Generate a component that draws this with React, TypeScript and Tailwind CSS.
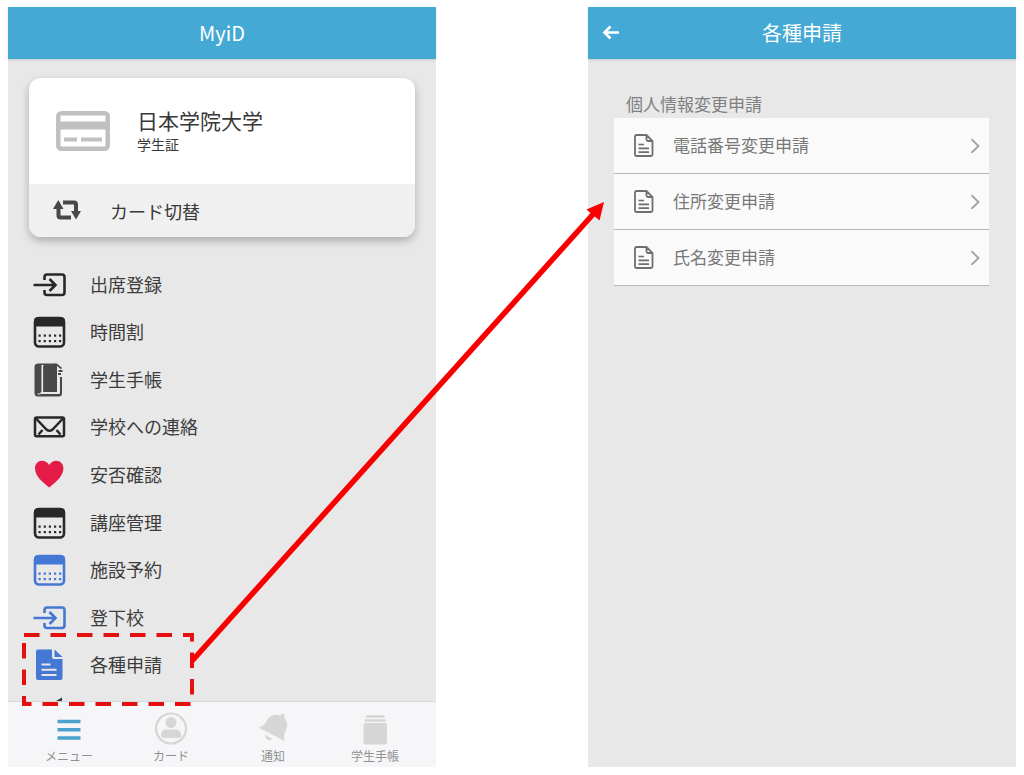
import React from 'react';

type IconProps = { className?: string };

const EnterIcon = ({ className }: IconProps) => (
  <svg className={className} width="34" height="34" viewBox="0 0 34 34" fill="none" stroke="currentColor" strokeWidth="2.6" aria-hidden="true">
    <path d="M11.5 12V9A2.5 2.500 0 0 1 14 6.500H29A2.500 2.500 0 0 1 31.500 9V24.500A2.500 2.500 0 0 1 29 27H14a2.500 2.500 0 0 1-2.500-2.500V22" />
    <path d="M.5 17H22M16.500 11l6 6-6 6" />
  </svg>
);

const CalendarIcon = ({ className }: IconProps) => (
  <svg className={className} width="34" height="34" viewBox="0 0 34 34" aria-hidden="true">
    <rect x="2" y="3" width="29" height="28.5" rx="4" fill="none" stroke="currentColor" strokeWidth="2.6" />
    <path d="M1 11.5V6a4 4 0 0 1 4-4h23a4 4 0 0 1 4 4v5.5z" fill="currentColor" />
    {[6.5, 11.7, 16.8, 22, 27].map((x) => (
      <g key={x} fill="currentColor">
        <rect x={x - 1} y="19.5" width="2.2" height="2.2" />
        <rect x={x - 1} y="25" width="2.2" height="2.2" />
      </g>
    ))}
  </svg>
);

const NotebookIcon = ({ className }: IconProps) => (
  <svg className={className} width="34" height="34" viewBox="0 0 34 34" aria-hidden="true">
    <path d="M5 .5H22l2 2V29H7.5v2H26a1 1 0 0 0 1-1V14h2v16.500a3 3 0 0 1-3 3H5A3.500 3.500 0 0 1 1.500 30V4A3.500 3.500 0 0 1 5 .5z" fill="currentColor" />
    <path d="M22 1.200c3 0 3.500 2.300 6.500 4.300" fill="none" stroke="currentColor" strokeWidth="1.8" />
    <path d="M25.500 8h4M25 11h3" stroke="currentColor" strokeWidth="2" />
    <path d="M9.500 2v27.500" stroke="#e8e8e8" strokeWidth="2.2" />
    <path d="M10.500 3v26" stroke="currentColor" strokeWidth=".8" />
    <path d="M4.500 31h3M11 30.500h13.500" stroke="#e8e8e8" strokeWidth="1.2" />
  </svg>
);

const MailIcon = ({ className }: IconProps) => (
  <svg className={className} width="34" height="34" viewBox="0 0 34 34" fill="none" stroke="currentColor" strokeWidth="2.5" aria-hidden="true">
    <rect x="2" y="7.5" width="29" height="18.7" rx="1.5" />
    <path d="M3 8.500l10.500 11q3 2.600 6 0L30 8.500M5.500 24.500l4-4.500M27.500 24.500l-4-4.500" />
  </svg>
);

const HeartIcon = ({ className }: IconProps) => (
  <svg className={className} width="34" height="34" viewBox="0 0 34 34" fill="currentColor" aria-hidden="true">
    <path d="M16.200 29.500C13 26.500 2 19.500 2 10.500 2 6 5 2.800 9 2.800c3.200 0 5.700 1.700 7.200 4.200 1.500-2.500 4-4.200 7.200-4.200 4 0 7 3.200 7 7.700 0 9-11 16-14.200 19z" />
  </svg>
);

const FileIcon = ({ className }: IconProps) => (
  <svg className={className} width="34" height="34" viewBox="0 0 34 34" aria-hidden="true">
    <path d="M5 1.500h14v7a2.500 2.500 0 0 0 2.500 2.500H29.500V30a2 2 0 0 1-2 2H5a2 2 0 0 1-2-2V3.500a2 2 0 0 1 2-2zM21.500 1.500l8 7.500h-8z" fill="currentColor" />
    <path d="M8.500 16.500h9M8.500 21.700h15M8.500 27h15" stroke="#e8e8e8" strokeWidth="2" />
  </svg>
);

const CardIcon = () => (
  <svg width="54" height="40" viewBox="0 0 54 40" fill="none" stroke="#c0c0c0" aria-hidden="true">
    <rect x="2.3" y="2.3" width="49.400" height="35.400" rx="3" strokeWidth="4.500" />
    <path d="M2 14.500h50" strokeWidth="8" />
    <path d="M8 28.500h13M25 28.500h21" strokeWidth="4" />
  </svg>
);

const SwitchIcon = () => (
  <svg width="28" height="22" viewBox="0 0 28 22" fill="none" stroke="#484848" strokeWidth="4" aria-hidden="true">
    <path d="M5.500 8v7.500a2 2 0 0 0 2 2H18M10 2.500h11a2 2 0 0 1 2 2V12" />
    <path d="M0 9L5.300 0 10.500 9zM18 11l5 8.500L28 11z" fill="#484848" stroke="none" />
  </svg>
);

const DocumentIcon = () => (
  <svg width="20" height="24" viewBox="0 0 20 24" fill="none" stroke="#6e6e6e" strokeWidth="1.8" aria-hidden="true">
    <path d="M2.500 1H12.500l6 6V20.500A1.500 1.500 0 0 1 17 22H2.500A1.500 1.500 0 0 1 1 20.500v-18A1.500 1.500 0 0 1 2.500 1zM12.500 1v4.500A1.500 1.500 0 0 0 14 7h4.500" />
    <path d="M4.500 10.500h5.500M4.500 14.300h10.500M4.500 18.200h10.500" strokeWidth="1.7" />
  </svg>
);

const ChevronIcon = () => (
  <svg width="10" height="16" viewBox="0 0 10 16" fill="none" stroke="#a0a0a0" strokeWidth="1.800" aria-hidden="true">
    <path d="M.5 1.200L7.500 8l-7 6.800" />
  </svg>
);

const menuItems = [
  { label: '出席登録', icon: EnterIcon, color: 'text-[#282828]' },
  { label: '時間割', icon: CalendarIcon, color: 'text-[#282828]' },
  { label: '学生手帳', icon: NotebookIcon, color: 'text-[#484848]' },
  { label: '学校への連絡', icon: MailIcon, color: 'text-[#282828]' },
  { label: '安否確認', icon: HeartIcon, color: 'text-[#e51b48]' },
  { label: '講座管理', icon: CalendarIcon, color: 'text-[#282828]' },
  { label: '施設予約', icon: CalendarIcon, color: 'text-[#4478d4]' },
  { label: '登下校', icon: EnterIcon, color: 'text-[#4478d4]' },
  { label: '各種申請', icon: FileIcon, color: 'text-[#4478d4]' },
];

const tabs = [
  {
    label: 'メニュー',
    icon: <path d="M5.500 9.500h23M5.500 17.700h23M5.500 26h23" stroke="#4aa3cd" strokeWidth="3.500" />,
  },
  {
    label: 'カード',
    icon: (
      <>
        <circle cx="17" cy="16.500" r="15" fill="none" stroke="#d6d6d6" strokeWidth="2.200" />
        <circle cx="17" cy="10.500" r="5.500" fill="#d6d6d6" />
        <path d="M7 23.500c0-4 2-6 6-6h8c4 0 6 2 6 6 0 1.500-1 2.500-2.500 2.500h-15C8 26 7 25 7 23.500z" fill="#d6d6d6" />
      </>
    ),
  },
  {
    label: '通知',
    icon: (
      <>
        <path d="M26.500 1.500l2 1v3c3 4 3.500 8 1.500 12.500-2 4-2.500 7-1.500 11L2.500 15.500c4-1 6.500-2.500 8-6.500C13.500 3.500 18 1.500 24.500 3.500z" fill="#d6d6d6" />
        <path d="M9 22.500l7.500 4.500c-3 2.500-8 .5-7.500-4.500z" fill="#d6d6d6" />
      </>
    ),
  },
  {
    label: '学生手帳',
    icon: (
      <>
        <path d="M9 4.500h16.500M7.500 8.500h19.500" stroke="#d6d6d6" strokeWidth="2.400" strokeLinecap="round" />
        <rect x="5.500" y="11" width="23.500" height="21.500" rx="2" fill="#d6d6d6" />
      </>
    ),
  },
];

const requests = ['電話番号変更申請', '住所変更申請', '氏名変更申請'];

const MenuScreen = () => (
  <section className="flex min-w-0 flex-1 flex-col bg-[#e8e8e8]">
    <header className="flex h-[52px] items-center justify-center bg-[#45a9d5] text-white shadow-sm">
      <h1 className="text-xl">MyiD</h1>
    </header>

    <div className="mx-[21px] mt-[19px] overflow-hidden rounded-xl bg-white shadow-[0_4px_8px_rgba(0,0,0,0.25)]">
      <div className="flex h-[106px] items-center gap-[27px] pl-[27px]">
        <CardIcon />
        <div className="pb-0.5 text-[#383838]">
          <h2 className="text-[21px] leading-7">日本学院大学</h2>
          <p className="text-sm leading-5">学生証</p>
        </div>
      </div>
      <button type="button" className="flex h-[53px] w-full items-center gap-[29px] bg-[#f0f0f0] pl-6 text-lg text-[#383838]">
        <SwitchIcon />
        カード切替
      </button>
    </div>

    <ul className="mt-6 flex flex-1 flex-col">
      {menuItems.map(({ label, icon: Icon, color }) => (
        <li key={label} className="flex flex-1">
          <a href="#" className="flex flex-1 items-center gap-[23px] pl-[25px] text-lg leading-6 text-[#3c3c3c]">
            <Icon className={color} />
            <span className="pb-0.5">{label}</span>
          </a>
        </li>
      ))}
    </ul>

    {/* top edge of the next entry, cut off by the tab bar */}
    <div className="flex h-[12px] items-end pl-[48px]">
      <svg width="8" height="4" viewBox="0 0 8 4" aria-hidden="true">
        <path d="M0 4L6 .5V4z" fill="#333333" />
      </svg>
    </div>

    <nav className="flex h-[66px] border-t border-[#d8d8d8] bg-[#f6f6f9] px-[10px]">
      {tabs.map((tab) => (
        <a key={tab.label} href="#" className="flex flex-1 flex-col items-center pt-[10px] text-xs leading-5 text-[#909090]">
          <svg width="34" height="34" viewBox="0 0 34 34" aria-hidden="true">
            {tab.icon}
          </svg>
          {tab.label}
        </a>
      ))}
    </nav>
  </section>
);

const RequestScreen = () => (
  <section className="min-w-0 flex-1 bg-[#e8e8e8]">
    <header className="grid h-[52px] grid-cols-[1fr_auto_1fr] items-center bg-[#45a9d5] px-[14px] text-white shadow-sm">
      <button type="button" aria-label="戻る" className="w-[18px]">
        <svg width="18" height="16" viewBox="0 0 18 16" fill="none" stroke="currentColor" strokeWidth="2.6" aria-hidden="true">
          <path d="M17 7.500H2.500M8.500 1.500l-6 6 6 6" />
        </svg>
      </button>
      <h1 className="text-xl">各種申請</h1>
    </header>

    <div className="mt-8 mr-[27px] ml-[26px]">
      <h2 className="pb-0.5 pl-3 text-[17px] leading-[25px] text-[#808080]">個人情報変更申請</h2>
      <ul>
        {requests.map((label) => (
          <li key={label}>
            <a href="#" className="flex h-14 items-center gap-[19px] border-b border-[#b8b8b8] bg-[#fafafa] pr-2 pl-5 text-[17px] text-[#787878]">
              <DocumentIcon />
              <span className="flex-1 pb-0.5">{label}</span>
              <ChevronIcon />
            </a>
          </li>
        ))}
      </ul>
    </div>
  </section>
);

const App = () => {
  return (
    <main className="relative flex min-h-screen gap-[152px] bg-white px-2 pt-[7px] pb-2 font-['Noto_Sans_CJK_JP',sans-serif]">
      <MenuScreen />
      <RequestScreen />

      {/* callout from the menu entry to its screen */}
      <svg className="pointer-events-none absolute inset-0 h-full w-full" viewBox="0 0 1024 775" preserveAspectRatio="none" aria-hidden="true">
        <path d="M24 635H192V704H24V635" fill="none" stroke="#e60f0f" strokeWidth="4" strokeDasharray="15.500 11" />
        <path d="M192 661L596 211" stroke="#f80000" strokeWidth="5.500" />
        <path d="M604 202L586.500 209.500L599.500 220.500z" fill="#f80000" />
      </svg>
    </main>
  );
};

export default App;
